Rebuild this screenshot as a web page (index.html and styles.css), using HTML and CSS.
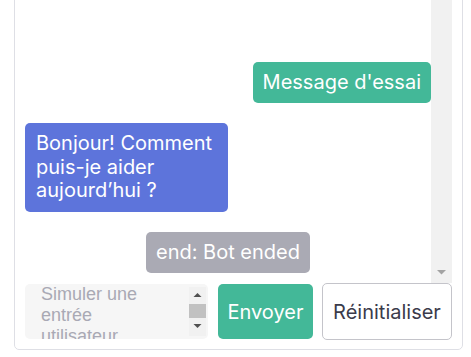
FILE: index.html
```html
<html>
  <head>
    <title>Chat - Simulateur</title>
    <link rel="stylesheet" href="styles.css">
  </head>

  <body>
    <div class="chat">
      <div class="history">
        <div class="messages">
          <div class="bubble user">Message d'essai</div>
          <div class="bubble bot">Bonjour! Comment puis-je aider aujourd’hui ?</div>
          <div class="bubble system">end: Bot ended</div>
        </div>

        <div class="scrollbar">
          <span class="arrow">
            <svg width="21" height="21" viewBox="0 0 21 21"><path d="M6 8h9l-4.5 4.5z" fill="#a3a3a3"/></svg>
          </span>
        </div>
      </div>

      <div class="composer">
        <div class="input">
          <textarea placeholder="Simuler une entrée utilisateur"></textarea>
          <div class="scrollbar small">
            <span class="arrow">
              <svg width="17" height="16" viewBox="0 0 17 16"><path d="M4.5 10h8l-4-4z" fill="#505050"/></svg>
            </span>
            <span class="track"><span class="thumb"></span></span>
            <span class="arrow">
              <svg width="17" height="16" viewBox="0 0 17 16"><path d="M4.5 4h8l-4 4z" fill="#505050"/></svg>
            </span>
          </div>
        </div>
        <button class="send">Envoyer</button>
        <button class="reset">Réinitialiser</button>
      </div>
    </div>
  </body>
</html>
```

FILE: styles.css
```css
html,
body {
  height: 100%;
}

body {
  margin: 0;
  padding: 0 8px 7px 14px;
  box-sizing: border-box;
  overflow: hidden;
  display: flex;
  flex-direction: column;
  justify-content: flex-end;
  font-family: Inter, "Noto Sans", sans-serif;
  background: #fff;
}

.chat {
  flex-shrink: 0;
  border: 1px solid #dedfe5;
  border-radius: 5px;
  padding: 10px 10px 9px;
}

.history {
  display: flex;
  height: 330px;
}

.messages {
  flex: 1;
  min-width: 0;
  overflow: hidden;
  display: flex;
  flex-direction: column;
  justify-content: flex-end;
  gap: 20px;
  padding-bottom: 10px;
}

.scrollbar {
  flex-shrink: 0;
  width: 21px;
  display: flex;
  flex-direction: column;
  justify-content: flex-end;
  background-color: #f1f1f1;

  & .arrow {
    display: block;
    line-height: 0;
  }

  &.small {
    width: 17px;
    margin: 3px 2px 3px 0;
    justify-content: space-between;

    & .track {
      flex: 1;
      padding-top: 1px;
    }

    & .thumb {
      display: block;
      height: 14px;
      background-color: #c1c1c1;
    }
  }
}

.bubble {
  max-width: 50%;
  box-sizing: border-box;
  padding: 9px 10px;
  border-radius: 5px;
  color: #fff;
  font-size: 20px;
  line-height: 1.17;

  &.user {
    align-self: flex-end;
    background-color: #43b898;
  }

  &.bot {
    align-self: flex-start;
    padding: 9px 11px;
    background-color: #5d74db;
  }

  &.system {
    align-self: center;
    background-color: #aaaab4;
  }
}

.composer {
  display: flex;
  align-items: center;
  gap: 10px;
  height: 57px;

  & .input {
    flex: 1;
    min-width: 0;
    height: 55px;
    display: flex;
    border-radius: 5px;
    background-color: #f6f6f6;
    overflow: hidden;
  }

  & textarea {
    flex: 1;
    min-width: 0;
    padding: 0 18px 0 16px;
    border: none;
    background: transparent;
    font-family: "Liberation Sans", Arial, sans-serif;
    font-size: 18px;
    line-height: 21px;
    resize: none;
    overflow: hidden;
    outline: none;

    &::placeholder {
      color: #a9a9b4;
    }
  }

  & button {
    flex-shrink: 0;
    font-family: inherit;
    font-size: 20px;
    padding: 0;
    border-radius: 5px;
    cursor: pointer;
  }

  & .send {
    width: 95px;
    height: 55px;
    border: none;
    background-color: #43b898;
    color: #fff;
  }

  & .reset {
    width: 130px;
    height: 57px;
    margin-left: -1px;
    border: 1px solid #c4c4ca;
    background-color: #fff;
    color: #3b3b4b;
  }
}
```
